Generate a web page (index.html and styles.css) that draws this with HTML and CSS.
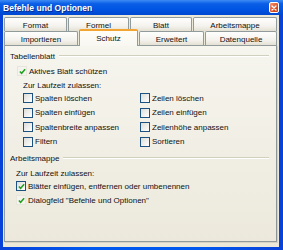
FILE: index.html
```html
<!DOCTYPE html>
<html lang="de">
<head>
    <meta charset="UTF-8">
    <title>Befehle und Optionen</title>
    <link rel="stylesheet" href="styles.css">
</head>
<body>
<div class="window">
    <div class="titlebar">
        <span class="title">Befehle und Optionen</span>
        <span class="close">
            <svg viewBox="0 0 10 10" class="close-x">
                <path d="M2.5 2.5 L7.5 7.5 M7.5 2.5 L2.5 7.5" stroke="#ffffff" stroke-width="1.6" stroke-linecap="round"/>
            </svg>
        </span>
    </div>
    <div class="client">
        <!-- Tabs -->
        <div class="tabs">
            <div class="tab-row">
                <div class="tab w-format">Format</div>
                <div class="tab w-formel">Formel</div>
                <div class="tab w-blatt">Blatt</div>
                <div class="tab w-mappe">Arbeitsmappe</div>
            </div>
            <div class="tab-row front">
                <div class="tab w-import">Importieren</div>
                <div class="tab active w-schutz">Schutz</div>
                <div class="tab w-erweitert">Erweitert</div>
                <div class="tab w-quelle">Datenquelle</div>
            </div>
        </div>

        <div class="panel">
            <!-- Tabellenblatt -->
            <div class="legend"><span>Tabellenblatt</span><div class="rule"></div></div>
            <div class="group">
                <div class="check top"><span class="box faint"><svg viewBox="0 0 8 8" class="tick"><path d="M1 4 L3 6 L7 1.5" /></svg></span>Aktives Blatt schützen</div>
                <div class="note first">Zur Laufzeit zulassen:</div>
                <div class="options">
                    <div class="check"><span class="box"></span>Spalten löschen</div>
                    <div class="check"><span class="box"></span>Zeilen löschen</div>
                    <div class="check"><span class="box"></span>Spalten einfügen</div>
                    <div class="check"><span class="box"></span>Zeilen einfügen</div>
                    <div class="check"><span class="box"></span>Spaltenbreite anpassen</div>
                    <div class="check"><span class="box"></span>Zeilenhöhe anpassen</div>
                    <div class="check"><span class="box"></span>Filtern</div>
                    <div class="check"><span class="box"></span>Sortieren</div>
                </div>
            </div>

            <!-- Arbeitsmappe -->
            <div class="legend second"><span>Arbeitsmappe</span><div class="rule"></div></div>
            <div class="group">
                <div class="note second">Zur Laufzeit zulassen:</div>
                <div class="check"><span class="box"><svg viewBox="0 0 8 8" class="tick"><path d="M1 4 L3 6 L7 1.5" /></svg></span>Blätter einfügen, entfernen oder umbenennen</div>
                <div class="check"><span class="box faint"><svg viewBox="0 0 8 8" class="tick"><path d="M1 4 L3 6 L7 1.5" /></svg></span>Dialogfeld "Befehle und Optionen"</div>
            </div>
        </div>
    </div>
</div>
</body>
</html>
```

FILE: styles.css
```css
html, body {
    margin: 0;
    padding: 0;
    background-color: #ffffff;
}
.window {
    width: 283px;
    height: 250px;
    box-sizing: border-box;
    background: linear-gradient(to right, #0842d8, #0058ee 30%, #0058ee 70%, #0842d8);
    display: flex;
    flex-direction: column;
    font-family: "Liberation Sans", Arial, sans-serif;
    font-size: 8px;
    color: #111111;
}
/* Title bar */
.titlebar {
    height: 15px;
    display: flex;
    align-items: center;
    justify-content: space-between;
    padding: 0 4px 0 3px;
    background: linear-gradient(to bottom, #3d8bf5 0%, #0a5ee6 25%, #0055e3 60%, #0048d0 100%);
}
.title {
    color: #ffffff;
    font-weight: bold;
    font-size: 8.5px;
    letter-spacing: 0.05px;
    text-shadow: 1px 1px 0 #0a2a8a;
}
.close {
    width: 10px;
    height: 11px;
    box-sizing: border-box;
    border: 1px solid #ffffff;
    border-radius: 2px;
    background: linear-gradient(135deg, #f09a74, #e0552a 55%, #c33c12);
    display: flex;
    align-items: center;
    justify-content: center;
}
.close-x {
    width: 8px;
    height: 8px;
}
/* Dialog body */
.client {
    flex: 1;
    margin: 0 4px 3px 3px;
    padding: 2px 1px 0 1px;
    background-color: #ece9d8;
    display: flex;
    flex-direction: column;
}
.tabs {
    display: flex;
    flex-direction: column;
}
.tab-row {
    display: flex;
    height: 14px;
}
.tab-row.front {
    position: relative;
    z-index: 1;
}
.tab {
    box-sizing: border-box;
    height: 14px;
    margin-right: 1px;
    border: 1px solid #919b9c;
    border-bottom: none;
    border-radius: 2px 2px 0 0;
    background: linear-gradient(to bottom, #fefefd, #f4f3ee 60%, #e4e1d3);
    display: flex;
    align-items: center;
    justify-content: center;
    padding-top: 1px;
}
.tab:last-child {
    margin-right: 0;
}
.tab.active {
    height: 17px;
    margin-top: -2px;
    margin-bottom: -1px;
    border-top: 2px solid #f2a533;
    background: linear-gradient(to bottom, #fffdf6, #f8f7f2);
    padding-top: 0;
}
.w-format { width: 63px; }
.w-formel { width: 61px; }
.w-blatt { width: 62px; }
.w-mappe { width: 84px; }
.w-import { width: 74px; }
.w-schutz { width: 59px; }
.w-erweitert { width: 65px; }
.w-quelle { width: 72px; }
/* Tab page */
.panel {
    box-sizing: border-box;
    width: 273px;
    height: 197px;
    border: 1px solid #919b9c;
    border-right-color: #8c9496;
    background: linear-gradient(to bottom, #f6f5ee, #ece9dc);
    box-shadow: 1px 1px 0 #d6d3c4;
    padding: 4px 7px 0 5px;
    display: flex;
    flex-direction: column;
}
.legend {
    height: 12px;
    display: flex;
    align-items: center;
}
.legend span {
    padding-right: 4px;
}
.legend.second {
    margin-top: 3px;
}
.rule {
    flex: 1;
    height: 0;
    border-top: 1px solid #d0d0bf;
    border-bottom: 1px solid #ffffff;
}
.group {
    display: flex;
    flex-direction: column;
    padding-left: 6px;
}
.check {
    height: 14px;
    display: flex;
    align-items: center;
    white-space: nowrap;
}
.check.top {
    margin-top: 2px;
    margin-left: 1px;
}
.box {
    width: 10px;
    height: 10px;
    box-sizing: border-box;
    border: 1px solid #1c5180;
    background: linear-gradient(135deg, #dcdcd7, #ffffff);
    margin-right: 2px;
    display: flex;
    align-items: center;
    justify-content: center;
    flex-shrink: 0;
}
.box.faint {
    border-color: #e8e6dc;
    background: #f4f3ee;
}
.tick {
    width: 7px;
    height: 7px;
}
.tick path {
    fill: none;
    stroke: #21a121;
    stroke-width: 1.8;
}
.note {
    height: 11px;
    display: flex;
    align-items: center;
}
.note.first {
    margin-top: 2px;
    margin-left: 7px;
}
.note.second {
    margin-top: 4px;
}
.options {
    margin-left: 7px;
    display: grid;
    grid-template-columns: 117px 1fr;
    grid-auto-rows: 14.5px;
}
.options .check {
    height: 14.5px;
}
```
